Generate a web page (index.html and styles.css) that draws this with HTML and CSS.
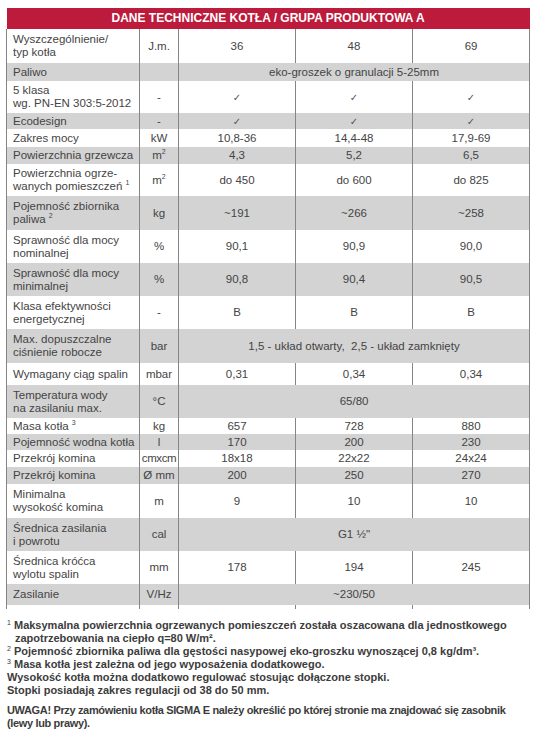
FILE: index.html
```html
<!DOCTYPE html>
<html lang="pl">
<head>
    <meta charset="UTF-8">
    <meta name="viewport" content="width=device-width, initial-scale=1.0">
    <title>Dane techniczne kotła</title>
    <link rel="stylesheet" href="styles.css">
</head>
<body>
    <table class="tech">
        <colgroup>
            <col class="c_label">
            <col class="c_unit">
            <col class="c_val">
            <col class="c_val">
            <col class="c_val">
        </colgroup>
        <tr class="head h21"><th colspan="5">DANE TECHNICZNE KOTŁA / GRUPA PRODUKTOWA A</th></tr>
        <tr class="h34"><td>Wyszczególnienie/<br>typ kotła</td><td>J.m.</td><td>36</td><td>48</td><td>69</td></tr>
        <tr class="grey h18"><td>Paliwo</td><td></td><td colspan="3">eko-groszek o granulacji 5-25mm</td></tr>
        <tr class="h32"><td>5 klasa<br>wg. PN-EN 303:5-2012</td><td>-</td><td class="tick">✓</td><td class="tick">✓</td><td class="tick">✓</td></tr>
        <tr class="grey h16"><td>Ecodesign</td><td>-</td><td class="tick">✓</td><td class="tick">✓</td><td class="tick">✓</td></tr>
        <tr class="h18"><td>Zakres mocy</td><td>kW</td><td>10,8-36</td><td>14,4-48</td><td>17,9-69</td></tr>
        <tr class="grey h17"><td>Powierzchnia grzewcza</td><td>m<sup>2</sup></td><td>4,3</td><td>5,2</td><td>6,5</td></tr>
        <tr class="h32"><td>Powierzchnia ogrze-<br>wanych pomieszczeń <sup>1</sup></td><td>m<sup>2</sup></td><td>do 450</td><td>do 600</td><td>do 825</td></tr>
        <tr class="grey h34"><td>Pojemność zbiornika<br>paliwa <sup>2</sup></td><td>kg</td><td>~191</td><td>~266</td><td>~258</td></tr>
        <tr class="h33"><td>Sprawność dla mocy<br>nominalnej</td><td>%</td><td>90,1</td><td>90,9</td><td>90,0</td></tr>
        <tr class="grey h33"><td>Sprawność dla mocy<br>minimalnej</td><td>%</td><td>90,8</td><td>90,4</td><td>90,5</td></tr>
        <tr class="h33"><td>Klasa efektywności<br>energetycznej</td><td>-</td><td>B</td><td>B</td><td>B</td></tr>
        <tr class="grey h34"><td>Max. dopuszczalne<br>ciśnienie robocze</td><td>bar</td><td colspan="3">1,5 - układ otwarty,&nbsp; 2,5 - układ zamknięty</td></tr>
        <tr class="h22"><td>Wymagany ciąg spalin</td><td>mbar</td><td>0,31</td><td>0,34</td><td>0,34</td></tr>
        <tr class="grey h33"><td>Temperatura wody<br>na zasilaniu max.</td><td>°C</td><td colspan="3">65/80</td></tr>
        <tr class="h16"><td>Masa kotła <sup>3</sup></td><td>kg</td><td>657</td><td>728</td><td>880</td></tr>
        <tr class="grey h16"><td>Pojemność wodna kotła</td><td>l</td><td>170</td><td>200</td><td>230</td></tr>
        <tr class="h17"><td>Przekrój komina</td><td class="narrow">cmxcm</td><td>18x18</td><td>22x22</td><td>24x24</td></tr>
        <tr class="grey h17"><td>Przekrój komina</td><td>Ø mm</td><td>200</td><td>250</td><td>270</td></tr>
        <tr class="h34"><td>Minimalna<br>wysokość komina</td><td>m</td><td>9</td><td>10</td><td>10</td></tr>
        <tr class="grey h33"><td>Średnica zasilania<br>i powrotu</td><td>cal</td><td colspan="3">G1 ½"</td></tr>
        <tr class="h33"><td>Średnica króćca<br>wylotu spalin</td><td>mm</td><td>178</td><td>194</td><td>245</td></tr>
        <tr class="grey h21"><td>Zasilanie</td><td>V/Hz</td><td colspan="3">~230/50</td></tr>
        <tr class="tail"><td></td><td></td><td></td><td></td><td></td></tr>
    </table>

    <div class="notes">
        <p class="ref"><sup>1</sup> Maksymalna powierzchnia ogrzewanych pomieszczeń została oszacowana dla jednostkowego zapotrzebowania na ciepło q=80&nbsp;W/m²&#8203;.</p>
        <p class="ref"><sup>2</sup> Pojemność zbiornika paliwa dla gęstości nasypowej eko-groszku wynoszącej 0,8 kg/dm³.</p>
        <p class="ref"><sup>3</sup> Masa kotła jest zależna od jego wyposażenia dodatkowego.</p>
        <p>Wysokość kotła można dodatkowo regulować stosując dołączone stopki.</p>
        <p>Stopki posiadają zakres regulacji od 38 do 50 mm.</p>
        <p class="warn">UWAGA! Przy zamówieniu kotła SIGMA E należy określić po której stronie ma znajdować się zasobnik (lewy lub prawy).</p>
    </div>
</body>
</html>
```

FILE: styles.css
```css
body{
    margin: 0;
    padding: 8px 6px;
    font-family: "Liberation Sans", Arial, "DejaVu Sans", sans-serif;
    color: #444;
    background: #fff;
}
.tech{
    border-collapse: collapse;
    table-layout: fixed;
    width: 523px;
    font-size: 11.5px;
    line-height: 13px;
}
.tech .c_label{
    width: 133px;
}
.tech .c_unit{
    width: 39px;
}
.tech .c_val{
    width: 117px;
}
.tech td{
    padding: 0 2px;
    text-align: center;
    vertical-align: middle;
    border-left: 1px solid #858585;
    border-right: 1px solid #858585;
    white-space: nowrap;
    overflow: hidden;
}
.tech td:first-child{
    text-align: left;
    padding-left: 6px;
}
.tech td.narrow{
    padding: 0;
    letter-spacing: -0.4px;
}
.tech td.tick{
    font-family: "DejaVu Sans", sans-serif;
    font-size: 10px;
    color: #555;
}
.tech sup{
    font-size: 7px;
    line-height: 0;
    vertical-align: 5px;
}
.tech .head th{
    background: #bd1b3c;
    color: #fff;
    font-size: 12px;
    font-weight: bold;
    text-align: center;
    padding: 0;
}
.tech .grey td{
    background: #d3d3d3;
}
.tech .h16{ height: 16px; }
.tech .h17{ height: 17px; }
.tech .h18{ height: 18px; }
.tech .h21{ height: 21px; }
.tech .h22{ height: 22px; }
.tech .h32{ height: 32px; }
.tech .h33{ height: 33px; }
.tech .h34{ height: 34px; }
.tech .tail{ height: 4px; }
.tech .tail td{
    padding: 0;
    line-height: 0;
}

.notes{
    margin-top: 10px;
    padding-left: 1px;
    max-width: 512px;
    font-size: 11px;
    line-height: 13px;
    font-weight: bold;
    color: #3c3c3c;
}
.notes p{
    margin: 0;
}
.notes .ref{
    padding-left: 8px;
    text-indent: -8px;
}
.notes sup{
    font-size: 7px;
    line-height: 0;
    vertical-align: 4px;
    font-weight: normal;
}
.notes .warn{
    margin-top: 7px;
    letter-spacing: -0.35px;
}
```
